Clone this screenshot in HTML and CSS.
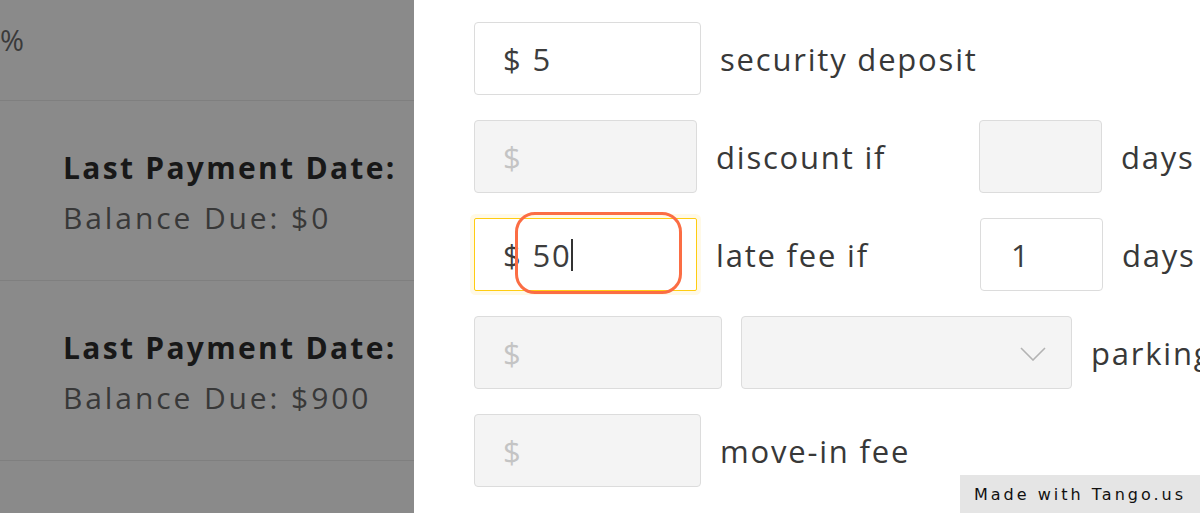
FILE: index.html
```html
<!DOCTYPE html>
<html>
<head>
<meta charset="utf-8">
<link rel="stylesheet" href="styles.css">
</head>
<body>
<div class="page">
  <aside class="backdrop">
    <div class="top-row"><span class="pct">%</span></div>
    <div class="pay-row">
      <div class="pay-info">
        <div class="pay-title">Last Payment Date:</div>
        <div class="pay-balance">Balance Due: $0</div>
      </div>
    </div>
    <div class="pay-row">
      <div class="pay-info">
        <div class="pay-title">Last Payment Date:</div>
        <div class="pay-balance">Balance Due: $900</div>
      </div>
    </div>
  </aside>
  <main class="panel">
    <div class="form-row">
      <div class="field w226"><span class="val">$ 5</span></div>
      <span class="label">security deposit</span>
    </div>
    <div class="form-row">
      <div class="field w222 disabled"><span class="ph">$</span></div>
      <span class="label col-label">discount if</span>
      <div class="field small disabled"></div>
      <span class="label">days</span>
    </div>
    <div class="form-row">
      <div class="field w222 focused">
        <span class="val">$ 50</span><span class="caret"></span>
        <div class="highlight"></div>
      </div>
      <span class="label col-label">late fee if</span>
      <div class="field small days-in"><span class="val one">1</span></div>
      <span class="label">days</span>
    </div>
    <div class="form-row">
      <div class="field w247 disabled"><span class="ph">$</span></div>
      <div class="field select disabled">
        <svg class="chev" width="26" height="14" viewBox="0 0 26 14"><path d="M1 1 L13 13 L25 1" fill="none" stroke="#b3b3b3" stroke-width="1.6"/></svg>
      </div>
      <span class="label">parking</span>
    </div>
    <div class="form-row">
      <div class="field w226 disabled"><span class="ph">$</span></div>
      <span class="label">move-in fee</span>
    </div>
  </main>
</div>
<div class="badge">Made with Tango.us</div>
</body>
</html>
```
FILE: styles.css
```css
html, body {
  margin: 0;
  padding: 0;
  width: 1200px;
  height: 513px;
  overflow: hidden;
  background: #ffffff;
  font-family: "Open Sans", "Noto Sans", sans-serif;
}
.page {
  display: flex;
  width: 1200px;
  height: 513px;
  overflow: hidden;
}
.backdrop {
  width: 414px;
  flex: none;
  background: #8a8a8a;
  display: flex;
  flex-direction: column;
}
.top-row {
  height: 101px;
  border-bottom: 1px solid #7f7f7f;
  display: flex;
  align-items: center;
  padding-bottom: 22px;
  box-sizing: border-box;
}
.pct {
  font-size: 29px;
  color: #3a3a3a;
  margin-left: 0;
}
.pay-row {
  height: 180px;
  border-bottom: 1px solid #7f7f7f;
  display: flex;
  align-items: center;
  padding-left: 63px;
  box-sizing: border-box;
}
.pay-info {
  line-height: 50px;
  padding-top: 4px;
  white-space: nowrap;
}
.pay-title {
  font-weight: 700;
  font-size: 30px;
  letter-spacing: 2.3px;
  color: #181818;
}
.pay-balance {
  font-size: 30px;
  letter-spacing: 2.9px;
  color: #383838;
}
.panel {
  flex: 1;
  padding: 22px 0 0 60px;
  display: flex;
  flex-direction: column;
  gap: 25px;
  overflow: hidden;
}
.form-row {
  display: flex;
  align-items: center;
  height: 73px;
  white-space: nowrap;
}
.field {
  position: relative;
  box-sizing: border-box;
  height: 73px;
  border: 1.5px solid #dcdcdc;
  border-radius: 4px;
  background: #ffffff;
  display: flex;
  align-items: center;
  padding-left: 28px;
  flex: none;
}
.field.disabled {
  background: #f4f4f4;
}
.w226 { width: 227px; }
.w222 { width: 223px; }
.w247 { width: 248px; }
.small { width: 123px; }
.days-in { margin-left: 1px; }
.select { width: 331px; margin-left: 19px; justify-content: flex-end; padding-right: 25px; }
.chev { display: block; margin-top: 2px; }
.val {
  font-size: 31px;
  letter-spacing: 1.8px;
  color: #3d3d3d;
}
.val.one { margin-left: 2px; }
.ph {
  font-size: 31px;
  color: #c4c4c4;
}
.caret {
  display: inline-block;
  width: 1.5px;
  height: 32px;
  background: #333;
  margin-left: 0;
}
.focused {
  border: 1.5px solid #ffcc11;
  border-radius: 2px;
  box-shadow: 0 0 0 4px rgba(255, 214, 80, 0.14);
}
.highlight {
  position: absolute;
  left: 40px;
  top: -7px;
  width: 167px;
  height: 82px;
  box-sizing: border-box;
  border: 3.5px solid #fb6d44;
  border-radius: 20px;
  pointer-events: none;
}
.label {
  font-size: 31px;
  letter-spacing: 1.8px;
  color: #383838;
  margin-left: 19px;
}
.col-label {
  width: 263px;
  flex: none;
  margin-right: 0;
}
.badge {
  position: fixed;
  right: 0;
  bottom: 0;
  width: 240px;
  height: 38px;
  background: #e5e5e5;
  color: #111;
  font-family: "DejaVu Sans", sans-serif;
  font-size: 16px;
  letter-spacing: 3px;
  display: flex;
  align-items: center;
  justify-content: center;
}
```
